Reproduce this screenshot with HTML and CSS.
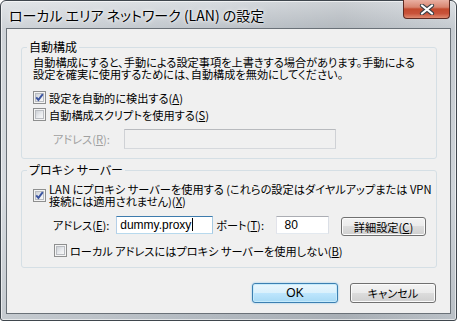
FILE: index.html
```html
<!DOCTYPE html>
<html lang="ja">
  <head>
    <meta charset="utf-8">
    <link rel="stylesheet" href="styles.css">
    <title>ローカル エリア ネットワーク (LAN) の設定</title>
  </head>
  <body>
    <div class="window">
      <div class="titlebar">
        <span class="title">ローカル エリア ネットワーク (LAN) の設定</span>
        <span class="close">
          <svg width="16" height="11" viewBox="0 0 16 11">
            <path d="M3 1.5 L13 9.5 M13 1.5 L3 9.5" stroke="#3a3f45" stroke-width="4.2" stroke-linecap="round"/>
            <path d="M3 1.5 L13 9.5 M13 1.5 L3 9.5" stroke="#fff" stroke-width="2.2" stroke-linecap="round"/>
          </svg>
        </span>
      </div>
      <div class="client">
        <fieldset class="group">
          <legend>自動構成</legend>
          <p class="desc">自動構成にすると、手動による設定事項を上書きする場合があります。手動による<br>設定を確実に使用するためには、自動構成を無効にしてください。</p>
          <div class="check-row first">
            <span class="cb"><span class="cb-in"><svg width="9" height="9" viewBox="0 0 9 9"><path d="M1.2 4.3 L3.4 6.9 L7.8 1.2" fill="none" stroke="#3c55a0" stroke-width="1.9"/></svg></span></span>
            <span>設定を自動的に検出する(<u>A</u>)</span>
          </div>
          <div class="check-row">
            <span class="cb"><span class="cb-in"></span></span>
            <span>自動構成スクリプトを使用する(<u>S</u>)</span>
          </div>
          <div class="field-row script-row disabled">
            <span class="field-label lbl-script">アドレス(<u>R</u>):</span>
            <span class="tb tb-disabled w-script"></span>
          </div>
        </fieldset>
        <fieldset class="group proxy">
          <legend>プロキシ サーバー</legend>
          <div class="check-row two-line">
            <span class="cb"><span class="cb-in"><svg width="9" height="9" viewBox="0 0 9 9"><path d="M1.2 4.3 L3.4 6.9 L7.8 1.2" fill="none" stroke="#3c55a0" stroke-width="1.9"/></svg></span></span>
            <span>LAN にプロキシ サーバーを使用する (これらの設定はダイヤルアップまたは VPN<br>接続には適用されません)(<u>X</u>)</span>
          </div>
          <div class="field-row addr-row">
            <span class="field-label lbl-addr">アドレス(<u>E</u>):</span>
            <span class="tb tb-focus w-addr">dummy.proxy<span class="caret"></span></span>
            <span class="field-label lbl-port">ポート(<u>T</u>):</span>
            <span class="tb w-port">80</span>
            <span class="btn btn-adv">詳細設定(<u>C</u>)</span>
          </div>
          <div class="check-row bypass">
            <span class="cb"><span class="cb-in"></span></span>
            <span>ローカル アドレスにはプロキシ サーバーを使用しない(<u>B</u>)</span>
          </div>
        </fieldset>
        <div class="actions">
          <span class="btn btn-default">OK</span>
          <span class="btn">キャンセル</span>
        </div>
      </div>
    </div>
  </body>
</html>
```
FILE: styles.css
```css
body {
  margin: 0;
  background: #fff;
  font-family: "Noto Sans CJK JP", sans-serif;
  font-size: 11.2px;
  font-feature-settings: "palt";
  color: #000;
}
.window {
  width: 457px;
  height: 321px;
  box-sizing: border-box;
  border: 1px solid #3f464d;
  border-radius: 6px 6px 3px 3px;
  padding: 0 5px 6px;
  display: flex;
  flex-direction: column;
  background:
    linear-gradient(90deg, rgba(255, 255, 255, 0.25) 0, rgba(255, 255, 255, 0) 45%, rgba(0, 0, 0, 0.06) 75%, rgba(255, 255, 255, 0.1) 100%),
    linear-gradient(180deg, #d9dde1 0, #bfc5cb 27px, #c9cfd5 60%, #b2b9c0 100%);
  box-shadow: inset 0 0 0 1px rgba(255, 255, 255, 0.6);
}
.titlebar {
  height: 27px;
  display: flex;
  align-items: center;
}
.title {
  padding-left: 3px;
  font-size: 14px;
  white-space: nowrap;
  text-shadow: 0 0 5px #fff, 0 0 2px #fff;
}
.close {
  margin-left: auto;
  align-self: flex-start;
  margin-top: -1px;
  margin-right: 1px;
  width: 47px;
  height: 19px;
  box-sizing: border-box;
  border: 1px solid #5e2a22;
  border-top: 0;
  border-radius: 0 0 4px 4px;
  background: linear-gradient(180deg, #e9b0a2 0, #d88570 40%, #c34a2e 50%, #c9533a 75%, #df8a70 100%);
  display: flex;
  align-items: center;
  justify-content: center;
}
.client {
  flex: 1;
  border: 1px solid #6a7178;
  background: #f0f0f0;
  padding: 11px 13px 0 14px;
  display: flex;
  flex-direction: column;
}
.group {
  margin: 0;
  min-width: 0;
  border: 1px solid #d5dfe5;
  border-radius: 3px;
  padding: 0 10px 9px 11px;
}
.group legend {
  margin-left: -6px;
  padding: 0 2px;
  line-height: 14px;
  font-size: 12px;
}
.proxy {
  margin-top: 4px;
  padding-bottom: 8px;
}
.desc {
  margin: 2px 0 0;
  line-height: 12px;
  white-space: nowrap;
}
.check-row {
  height: 17px;
  display: flex;
  align-items: center;
  gap: 3px;
  white-space: nowrap;
}
.check-row.first {
  margin-top: 9px;
}
.check-row.two-line {
  height: 24px;
  margin-top: 6px;
  line-height: 12px;
}
.check-row.bypass {
  margin-top: 6px;
  margin-left: 21px;
}
.cb {
  width: 13px;
  height: 13px;
  box-sizing: border-box;
  border: 1px solid #8e8f8f;
  background: #f4f4f4;
  padding: 1px;
  flex: none;
}
.cb-in {
  display: block;
  width: 9px;
  height: 9px;
  box-sizing: border-box;
  border: 1px solid #b9bcc1;
  background: linear-gradient(135deg, #cdd1d6 0, #e9ebee 55%, #f8f8f8 100%);
}
.cb-in svg {
  display: block;
  margin: -1px;
}
.field-row {
  display: flex;
  align-items: flex-start;
  white-space: nowrap;
  margin-left: 20px;
}
.script-row {
  margin-top: 6px;
  height: 20px;
  align-items: center;
}
.disabled .field-label {
  color: #a0a0a0;
}
.field-label {
  line-height: 18px;
}
.lbl-script {
  width: 71px;
}
.lbl-addr {
  width: 64px;
}
.lbl-port {
  width: 61px;
  margin-left: 3px;
}
.addr-row {
  margin-top: 9px;
  height: 20px;
}
.tb {
  height: 18px;
  box-sizing: border-box;
  border: 1px solid;
  border-color: #abadb3 #dbdfe6 #e3e9ef #e2e3ea;
  background: #fff;
  padding: 0 7px;
  line-height: 16px;
  font-family: "Liberation Sans", "Noto Sans CJK JP", sans-serif;
  font-size: 12px;
}
.tb-focus {
  border-color: #3d7bad #a4c9e3 #b7d9ed #b5cfe7;
  padding-left: 3px;
}
.tb-disabled {
  height: 20px;
  background: #f0f0f0;
  border-color: #b8babe #cfd1d5 #d5d8dc #cfd1d5;
}
.caret {
  display: inline-block;
  width: 1px;
  height: 13px;
  margin-left: 1px;
  vertical-align: -2px;
  background: #000;
}
.w-script {
  width: 212px;
}
.w-addr {
  width: 98px;
}
.w-port {
  width: 53px;
}
.btn {
  height: 20px;
  width: 86px;
  box-sizing: border-box;
  border: 1px solid #707070;
  border-radius: 3px;
  background: linear-gradient(180deg, #f3f3f3 0, #ebebeb 50%, #dddddd 50%, #cfcfcf 100%);
  box-shadow: inset 0 0 0 1px #fbfbfb;
  display: flex;
  align-items: center;
  justify-content: center;
  line-height: 16px;
  white-space: nowrap;
}
.btn-adv {
  margin-left: 12px;
  margin-top: 1px;
  height: 19px;
}
.btn-default {
  border-color: #3c7fb1;
  background: linear-gradient(180deg, #eaf6fd 0, #d9f0fc 50%, #bee6fd 50%, #a7d9f5 100%);
  box-shadow: inset 0 0 0 1px #c6ebfc, 0 0 2px #7fc3ec;
  font-family: "Liberation Sans", sans-serif;
  font-size: 12px;
}
.actions {
  margin-top: 15px;
  margin-right: 1px;
  display: flex;
  justify-content: flex-end;
  gap: 12px;
}
```
